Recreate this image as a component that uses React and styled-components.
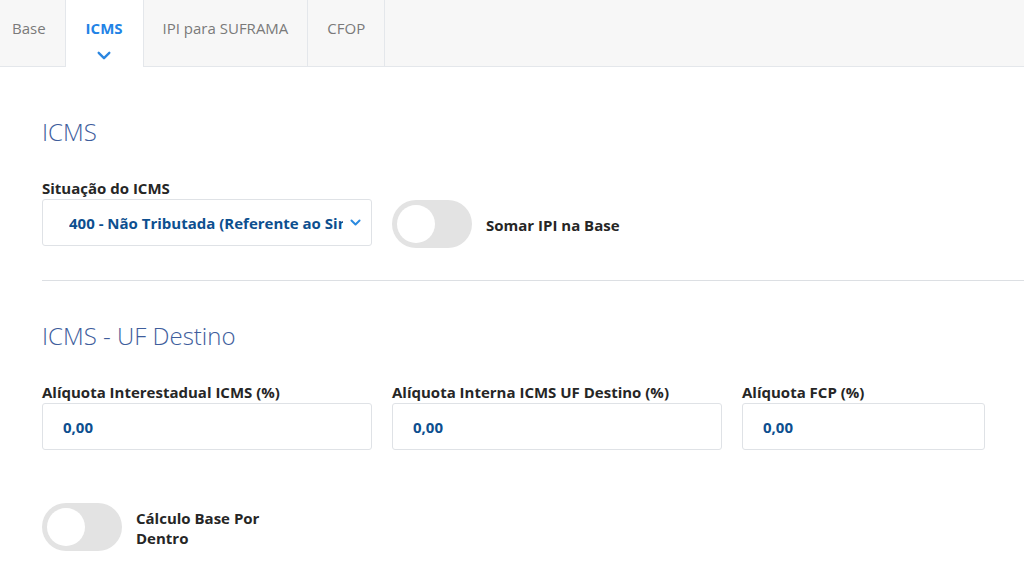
import React from "react";
import styled, { createGlobalStyle } from "styled-components";

const GlobalStyle = createGlobalStyle`
  html, body {
    margin: 0;
    padding: 0;
    background: #fff;
    font-family: "Open Sans", "Liberation Sans", sans-serif;
  }
  * { box-sizing: border-box; }
`;

const tabs = ["Base", "ICMS", "IPI para SUFRAMA", "CFOP"];

const Chevron = ({ size = 14, color = "#2a7fd4", width = 2.4 }) => (
  <svg width={size} height={size} viewBox="0 0 16 16" fill="none">
    <path d="M3 5.5 L8 10.5 L13 5.5" stroke={color} strokeWidth={width} strokeLinecap="round" strokeLinejoin="round" />
  </svg>
);

const Switch = () => (
  <Track>
    <Knob />
  </Track>
);

const App = () => {
  return (
    <Page>
      <GlobalStyle />
      <TabBar>
        {tabs.map(t => (
          <Tab key={t} active={t === "ICMS"}>
            {t}
            {t === "ICMS" && (
              <TabMark>
                <Chevron size={17} color="#2b86e0" width={2.2} />
              </TabMark>
            )}
          </Tab>
        ))}
      </TabBar>

      <Content>
        <Section>
          <Heading top="49px">ICMS</Heading>
          <Row>
            <Field width="330px">
              <Label>Situação do ICMS</Label>
              <SelectBox>
                <Value>400 - Não Tributada (Referente ao Simples Nacional)</Value>
                <Chevron size={13} color="#2a8ae0" width={2.4} />
              </SelectBox>
            </Field>
            <SwitchRow>
              <Switch />
              <SwitchLabel>Somar IPI na Base</SwitchLabel>
            </SwitchRow>
          </Row>
        </Section>

        <Divider />

        <Section>
          <Heading top="39px">ICMS - UF Destino</Heading>
          <Grid>
            <Field>
              <Label>Alíquota Interestadual ICMS (%)</Label>
              <InputBox>
                <Value>0,00</Value>
              </InputBox>
            </Field>
            <Field>
              <Label>Alíquota Interna ICMS UF Destino (%)</Label>
              <InputBox>
                <Value>0,00</Value>
              </InputBox>
            </Field>
            <Field>
              <Label>Alíquota FCP (%)</Label>
              <InputBox>
                <Value>0,00</Value>
              </InputBox>
            </Field>
          </Grid>
          <BottomSwitch>
            <Switch />
            <SwitchLabel narrow>Cálculo Base Por Dentro</SwitchLabel>
          </BottomSwitch>
        </Section>
      </Content>
    </Page>
  );
};

const Page = styled.div`
  width: 1024px;
  height: 566px;
  overflow: hidden;
  background: #fff;
`;

const TabBar = styled.div`
  display: flex;
  height: 67px;
  background: #f7f7f7;
  border-bottom: 1px solid #e4e7eb;
`;

const Tab = styled.div`
  position: relative;
  display: flex;
  align-items: flex-start;
  justify-content: center;
  padding: 18px ${p => (p.active ? "20px" : "19px")} 0;
  height: ${p => (p.active ? "67px" : "66px")};
  font-size: 15px;
  font-weight: ${p => (p.active ? 700 : 400)};
  color: ${p => (p.active ? "#2283e6" : "#7a7a7a")};
  background: ${p => (p.active ? "#fff" : "transparent")};
  border-right: 1px solid #e4e7eb;
  border-left: ${p => (p.active ? "1px solid #e4e7eb" : "none")};
  margin-left: ${p => (p.active ? "-1px" : "0")};
  &:first-child {
    padding: 18px 19px 0 12px;
  }
`;

const TabMark = styled.span`
  position: absolute;
  left: 50%;
  top: 47px;
  transform: translateX(-50%);
  display: flex;
`;

const Content = styled.div`
  padding: 0 0 0 42px;
`;

const Section = styled.div`
  display: flex;
  flex-direction: column;
`;

const Heading = styled.h2`
  margin: ${p => p.top} 0 0;
  font-size: 24px;
  font-weight: 300;
  line-height: 32px;
  color: #3e5d9c;
`;

const Row = styled.div`
  display: flex;
  align-items: flex-end;
  gap: 20px;
  margin-top: 30px;
`;

const Field = styled.div`
  display: flex;
  flex-direction: column;
  width: ${p => p.width || "auto"};
`;

const Label = styled.label`
  font-size: 15px;
  font-weight: 700;
  color: #262626;
  line-height: 20px;
  margin-bottom: 1px;
`;

const SelectBox = styled.div`
  display: flex;
  align-items: center;
  gap: 6px;
  height: 47px;
  padding: 0 9px 0 26px;
  border: 1px solid #dfe2e6;
  border-radius: 3px;
  background: #fff;
`;

const InputBox = styled.div`
  display: flex;
  align-items: center;
  height: 47px;
  padding: 0 20px;
  border: 1px solid #dfe2e6;
  border-radius: 3px;
  background: #fff;
`;

const Value = styled.span`
  flex: 1;
  min-width: 0;
  white-space: nowrap;
  overflow: hidden;
  font-size: 15px;
  font-weight: 700;
  color: #0d4f8f;
`;

const SwitchRow = styled.div`
  display: flex;
  align-items: center;
  gap: 14px;
  height: 48px;
  margin-bottom: -2px;
`;

const Track = styled.div`
  display: flex;
  align-items: center;
  width: 80px;
  height: 48px;
  padding: 0 5px;
  border-radius: 24px;
  background: #e3e3e3;
`;

const Knob = styled.div`
  width: 38px;
  height: 38px;
  border-radius: 50%;
  background: #fff;
`;

const SwitchLabel = styled.span`
  font-size: 15px;
  font-weight: 700;
  color: #262626;
  line-height: 20px;
  margin-top: ${p => (p.narrow ? "2px" : "2px")};
  max-width: ${p => (p.narrow ? "150px" : "none")};
`;

const Divider = styled.hr`
  margin: 34px 0 0;
  border: none;
  border-top: 1px solid #dcdfe3;
`;

const Grid = styled.div`
  display: grid;
  grid-template-columns: 330px 330px 243px;
  column-gap: 20px;
  margin-top: 30px;
`;

const BottomSwitch = styled.div`
  display: flex;
  align-items: center;
  gap: 14px;
  margin-top: 53px;
`;

export default App;
